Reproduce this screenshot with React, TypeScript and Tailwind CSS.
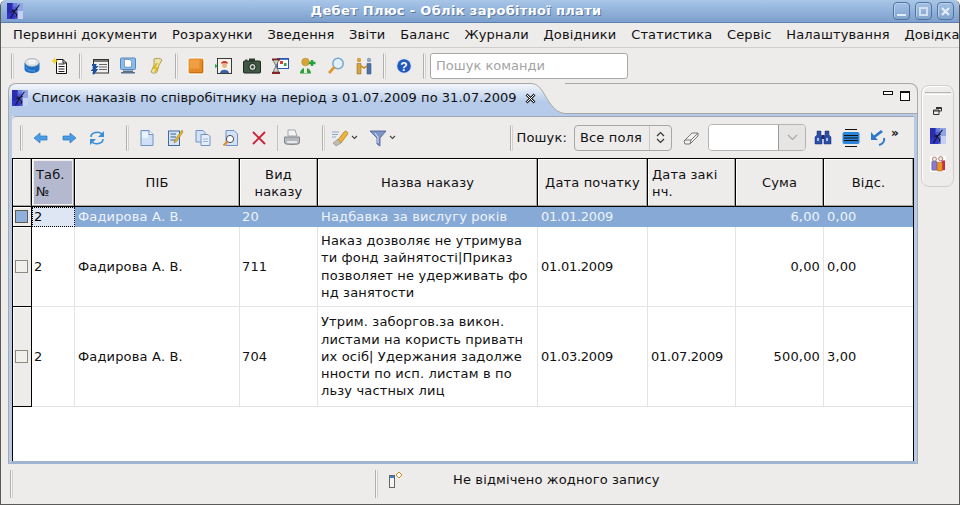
import type { ReactNode } from "react";

function Ico({ size = 18, children, className = "" }: { size?: number; children: ReactNode; className?: string }) {
  return (
    <svg width={size} height={size} viewBox="0 0 18 18" className={"shrink-0 " + className}>
      {children}
    </svg>
  );
}

const AppLogo = ({ size = 16 }: { size?: number }) => (
  <Ico size={size}>
    <rect x="0" y="0" width="18" height="18" fill="#4f5ad6" />
    <rect x="0" y="0" width="6" height="18" fill="#2a2cae" />
    <rect x="0" y="12" width="9" height="6" fill="#3136c4" />
    <rect x="11" y="0" width="7" height="9" fill="#8fa5e4" />
    <rect x="12" y="9" width="6" height="9" fill="#c6d0f2" />
    <rect x="7" y="0" width="4" height="4" fill="#6f83dc" />
    <path d="M4 17 L8 10 L6 7 M8 10 L14 2 M8 10 L11 13 L10 16 M5 10 L12 7" stroke="#141634" strokeWidth="1.3" fill="none" />
  </Ico>
);

const Sep = () => <div className="mr-[4px] ml-[5px] h-[26px] w-[3px] shrink-0 rounded-sm border-x border-r-[#d2d1cf] border-l-[#b0afad] bg-[#f7f6f5]" />;

const Db = () => (
  <Ico>
    <path d="M1.5 6 V12 C1.5 17.5 16.5 17.5 16.5 12 V6 Z" fill="#1f70c4" />
    <ellipse cx="9" cy="5.5" rx="7" ry="4" fill="#dfe3e8" stroke="#93a0ae" strokeWidth=".7" />
    <path d="M5 4 H13 M6 6 H12" stroke="#fff" />
    <path d="M3 10 C5 14 9 14 12 14" stroke="#5da6ea" fill="none" />
  </Ico>
);
const NewNote = () => (
  <Ico>
    <path d="M5.5 2.5 H12 L15.5 6 V16.5 H5.5 Z" fill="#fff" stroke="#111" />
    <path d="M12 2.5 V6 H15.5" fill="none" stroke="#111" />
    <path d="M7.5 7 H13.5 M7.5 9.5 H13.5 M7.5 12 H13.5 M7.5 14.5 H13.5" stroke="#222" />
    <path d="M3.5 0 L4.5 3 L7.5 4 L4.5 5 L3.5 8 L2.5 5 L0 4 L2.5 3 Z" fill="#f2d21c" />
  </Ico>
);
const ListDoc = () => (
  <Ico>
    <rect x="2.5" y="2.5" width="15" height="13.5" fill="#efefef" stroke="#333" />
    <path d="M3 4 H17" stroke="#777" strokeWidth="2" />
    <path d="M8 7.5 H16 M8 10 H16 M8 12.5 H16" stroke="#666" />
    <path d="M1 8 H4 L3 10 H5 L2 13 H5 L2 17" stroke="#1c4f9f" strokeWidth="2.2" fill="none" />
  </Ico>
);
const Monitor = () => (
  <Ico>
    <rect x="1.5" y="1" width="15" height="11.5" rx="1" fill="#86bdf0" stroke="#5b86ba" />
    <path d="M5.5 2.5 H10.5 L12.5 4.5 V10 H5.5 Z" fill="#fff" stroke="#567" strokeWidth=".5" />
    <path d="M4 13.5 H14 V15 H16 V16.5 H2 V15 H4 Z" fill="#59708c" />
  </Ico>
);
const Scroll = () => (
  <Ico>
    <path d="M7 2 C9 1 14 1 15 3 L12 8 L10 15 C8 17 5 16 4 15 L7 8 Z" fill="#ece3a8" stroke="#9c8c48" strokeWidth=".8" />
    <path d="M10 6 L7 11 H10 L8 15" stroke="#e0b70f" strokeWidth="1.6" fill="none" />
  </Ico>
);
const Orange = () => (
  <Ico>
    <rect x="1" y="1" width="16" height="16" rx="2" fill="#e58a26" stroke="#fff" />
    <rect x="2.5" y="2.5" width="10" height="9" rx="1" fill="#ee9f42" />
    <path d="M2.5 15.5 H15.5 V4" stroke="#c5701c" fill="none" />
  </Ico>
);
const Photo = () => (
  <Ico>
    <rect x="2.5" y="1.5" width="14" height="15" fill="#f3f1ea" stroke="#3a3a3a" />
    <path d="M6 6.5 C6 3 13 3 13 6.5 Z" fill="#c8321e" />
    <circle cx="9.5" cy="8.5" r="2.4" fill="#e8b083" />
    <path d="M5 16 C5 11.5 14 11.5 14 16 Z" fill="#3b62a8" />
    <path d="M0 7 L3 9 L0 11 Z" fill="#1ea54a" />
  </Ico>
);
const Camera = () => (
  <Ico>
    <rect x=".5" y="4" width="17" height="12" rx="1" fill="#3f5945" stroke="#1f2b22" />
    <rect x="6" y="1.5" width="6" height="3" fill="#2a3b2e" />
    <rect x="2" y="2.5" width="2.5" height="1.5" fill="#444" />
    <circle cx="9.5" cy="10" r="3.6" fill="#c9cfc9" stroke="#1d241f" />
    <circle cx="9.5" cy="10" r="1.4" fill="#243" />
  </Ico>
);
const Hourglass = () => (
  <Ico>
    <rect x="6.5" y="1.5" width="11" height="10" fill="#fff" stroke="#2b56b0" />
    <path d="M6.5 2 H17.5" stroke="#2b56b0" strokeWidth="1.6" />
    <rect x="9" y="4" width="3" height="3" fill="#d83a2a" />
    <rect x="13" y="6" width="2.5" height="3" fill="#2aa04a" />
    <path d="M1 2.5 H9 M1 16 H9" stroke="#8c1e1e" strokeWidth="2" />
    <path d="M2 3 L8 3 L5 9 L8 15 L2 15 L5 9 Z" fill="#d8d2c5" stroke="#444" strokeWidth=".7" />
  </Ico>
);
const UserAdd = () => (
  <Ico>
    <circle cx="6.5" cy="5" r="3.8" fill="#d8a534" stroke="#a87a1f" strokeWidth=".5" />
    <path d="M1 16.5 C1 9 12 9 12 16.5 Z" fill="#2f9c3f" />
    <path d="M5 11 H8 V16 H5 Z" fill="#e6f2d0" />
    <path d="M13 3 V9 M10 6 H16.5" stroke="#1ea33a" strokeWidth="2.4" />
  </Ico>
);
const Magnifier = () => (
  <Ico>
    <circle cx="11" cy="6.5" r="5.2" fill="#e2f0fb" stroke="#79a7cf" strokeWidth="1.5" />
    <path d="M7.5 10 L2 16" stroke="#dd9630" strokeWidth="2.6" />
  </Ico>
);
const Handshake = () => (
  <Ico>
    <circle cx="4" cy="3" r="2.2" fill="#d9a441" />
    <circle cx="14" cy="3" r="2.2" fill="#8fa5c6" />
    <path d="M2 6.5 H6 V17 H2 Z" fill="#d9a441" stroke="#80601f" strokeWidth=".5" />
    <path d="M12 6.5 H16 V17 H12 Z" fill="#4f74ad" stroke="#2d4670" strokeWidth=".5" />
    <path d="M6 9 L9 11 L12 9" stroke="#c98e2c" strokeWidth="1.6" fill="none" />
  </Ico>
);
const Help = () => (
  <Ico>
    <circle cx="9" cy="9" r="8" fill="#dfe5ee" />
    <circle cx="9" cy="9" r="6.8" fill="#2158c0" />
    <text x="9" y="13.5" textAnchor="middle" fontSize="12" fontWeight="700" fill="#fff" fontFamily="'Liberation Sans', sans-serif">?</text>
  </Ico>
);
const ArrowL = () => (
  <Ico>
    <path d="M2 9 L8 4 V7 H15 V11 H8 V14 Z" fill="#4a9de3" stroke="#2a76be" strokeWidth=".7" />
  </Ico>
);
const ArrowR = () => (
  <Ico>
    <path d="M16 9 L10 4 V7 H3 V11 H10 V14 Z" fill="#4a9de3" stroke="#2a76be" strokeWidth=".7" />
  </Ico>
);
const Refresh = () => (
  <Ico>
    <path d="M3 8 C3 3 11 2 14 5 M15 10 C15 15 7 16 4 13" stroke="#3a8ed8" strokeWidth="1.6" fill="none" />
    <path d="M16 2 V8 H10 Z M2 16 V10 H8 Z" fill="#3a8ed8" />
  </Ico>
);
const Doc = () => (
  <Ico>
    <path d="M3 1.5 H11 L15 5.5 V16.5 H3 Z" fill="#cfe0f6" stroke="#7192c4" />
    <path d="M4 3 H10 V9 H4 Z" fill="#eaf2fc" />
    <path d="M11 1.5 V5.5 H15" fill="#fff" stroke="#7192c4" />
  </Ico>
);
const EditDoc = () => (
  <Ico>
    <rect x="2.5" y="2" width="11" height="14.5" fill="#d6e4f6" stroke="#3f6aa6" />
    <path d="M4.5 5 H10 M4.5 8 H10 M4.5 11 H9" stroke="#3a5f93" />
    <path d="M16 1 L9 11 L8 14 L11 12 L17 3 Z" fill="#ecb81e" stroke="#8a6b10" strokeWidth=".5" />
  </Ico>
);
const CopyDoc = () => (
  <Ico>
    <path d="M2 1.5 H9 L11 3.5 V13 H2 Z" fill="#d3e2f6" stroke="#7192c4" />
    <path d="M7 5.5 H14 L16 7.5 V16.5 H7 Z" fill="#e4edf9" stroke="#7192c4" />
    <path d="M9 10 H14 M9 12.5 H14" stroke="#9bb5d8" />
  </Ico>
);
const FindDoc = () => (
  <Ico>
    <path d="M4 1.5 H12 L15.5 5 V16.5 H4 Z" fill="#d3e2f6" stroke="#7192c4" />
    <circle cx="8" cy="10" r="3.6" fill="#fff" stroke="#4d4d4d" />
    <path d="M5.5 12.5 L1.5 16.5" stroke="#d9902c" strokeWidth="2.2" />
  </Ico>
);
const Cross = () => (
  <Ico>
    <path d="M3 3 L15 15 M15 3 L3 15" stroke="#cf1f38" strokeWidth="1.9" />
  </Ico>
);
const Printer = () => (
  <Ico>
    <path d="M5 1 H12 L14 7 H5 Z" fill="#f3f4f5" stroke="#a3a7ab" />
    <path d="M1.5 8 H16.5 V14 C16.5 16 1.5 16 1.5 14 Z" fill="#b4b8bc" stroke="#85898e" />
    <rect x="4" y="12" width="10" height="2" fill="#e6e8ea" />
  </Ico>
);
const Stamp = () => (
  <Ico>
    <path d="M7 11 L13 3 C15 1 18 3 16 6 L10 14 Z" fill="#efb23a" stroke="#9a6f18" strokeWidth=".6" />
    <path d="M2 14 L7 10 L10 14 L5 17 Z" fill="#c2bcae" stroke="#776" strokeWidth=".5" />
    <path d="M1 3 H8 M1 5.5 H7 M1 8 H5" stroke="#8fa6d0" />
  </Ico>
);
const Funnel = () => (
  <Ico>
    <path d="M1 2 H17 L11 9 V17 L8 15 V9 Z" fill="#7e95c8" stroke="#44598f" strokeWidth=".8" />
    <path d="M6 4 L9 8 V14" stroke="#dfe7f6" fill="none" />
  </Ico>
);
const Chev = () => (
  <svg width="7" height="5" viewBox="0 0 7 5" className="shrink-0">
    <path d="M1 1 L3.5 3.5 L6 1" stroke="#444" strokeWidth="1.1" fill="none" />
  </svg>
);
const Eraser = () => (
  <Ico>
    <path d="M2 12 L10 4 H16 L16 7 L8 15 H3 Z" fill="#f2f1ef" stroke="#777" />
    <path d="M3 11 H9 L8 15 M9 11 L16 4" stroke="#777" fill="none" />
  </Ico>
);
const Binoculars = () => (
  <Ico>
    <path d="M3 2 H7 V6 L8 8 V15 H1 V8 L3 6 Z M11 2 H15 V6 L17 8 V15 H10 V8 L11 6 Z" fill="#2d4fa8" stroke="#1b2f6f" strokeWidth=".5" />
    <rect x="7.5" y="6" width="3" height="4" fill="#1b2f6f" />
    <rect x="3" y="9" width="2" height="3" fill="#a8c0ee" />
    <rect x="12" y="9" width="2" height="3" fill="#a8c0ee" />
  </Ico>
);
const Lines = () => (
  <Ico>
    <rect x=".5" y="3" width="17" height="12" rx="2" fill="#2c85d8" />
    <path d="M3 .5 H15 M3 17.5 H15 M2 6.5 H16 M2 9 H16 M2 11.5 H16" stroke="#111" strokeWidth="1.1" />
  </Ico>
);
const BackArrow = () => (
  <Ico>
    <path d="M2 3 V11 H9 L6.5 8.5 L14 3 L12 1 L5 6.5 L2 3 Z" fill="#2c78cc" />
    <path d="M15 9 C16 12 14 15 10 16" stroke="#2c78cc" strokeWidth="2" fill="none" />
  </Ico>
);
const People = () => (
  <Ico size={16}>
    <rect x="0" y="0" width="18" height="18" fill="#fff" />
    <circle cx="5" cy="3.5" r="2.4" fill="#f0e4dc" stroke="#732" strokeWidth=".6" />
    <circle cx="12" cy="3" r="2.4" fill="#f0e4dc" stroke="#732" strokeWidth=".6" />
    <rect x="2" y="6" width="6" height="10" rx="1" fill="#8c78dc" stroke="#553" strokeWidth=".5" />
    <rect x="13" y="5" width="4" height="11" fill="#c92a4a" />
    <rect x="8" y="7" width="6" height="10" rx="1" fill="#e8951f" stroke="#942" strokeWidth=".5" />
  </Ico>
);
const RestoreSmall = () => (
  <svg width="9" height="8" viewBox="0 0 9 8">
    <path d="M3 .5 H8.5 V4 H6 M.5 3 H6 V7.5 H.5 Z M.5 4 H6 M3 1.5 H8.5" stroke="#333" fill="none" />
  </svg>
);
const StatusIcon = () => (
  <svg width="16" height="18" viewBox="0 0 16 18">
    <rect x=".5" y="4.5" width="5" height="12" fill="#f5f5f5" stroke="#666" />
    <rect x="1" y="5" width="4" height="2" fill="#3f7fc7" />
    <path d="M10 1 L13 4 L10 7 L7 4 Z" fill="#fff" stroke="#c98e2c" />
  </svg>
);

const TBtn = ({ children }: { children: ReactNode }) => <div className="flex w-[28px] shrink-0 items-center justify-center">{children}</div>;

const Header = ({ w, children, left, active }: { w: string; children: ReactNode; left?: boolean; active?: boolean }) => (
  <div className={w + " flex shrink-0 items-center border-r border-r-black p-[2px] leading-[17px] shadow-[inset_-1px_-1px_0_#a8a7a5,inset_1px_1px_0_#fff] last:border-r-0 " + (left ? "text-left" : "justify-center text-center")}>
    <div className={"flex h-full w-full items-center " + (left ? "pl-[2px]" : "justify-center") + (active ? " bg-[#b5b9d0]" : "")}>
      <span>{children}</span>
    </div>
  </div>
);

const widths = ["w-[43px]", "w-[165px]", "w-[78px]", "w-[220px]", "w-[110px]", "w-[88px]", "w-[88px]", "w-[89px]"];

type Row = { h: string; tab: string; name: string; kind: string; title: string[]; start: string; end: string; sum: string; dev: string; sel?: boolean };

const rows: Row[] = [
  { h: "h-[20px]", tab: "2", name: "Фадирова А. В.", kind: "20", title: ["Надбавка за вислугу років"], start: "01.01.2009", end: "", sum: "6,00", dev: "0,00", sel: true },
  { h: "h-[80px]", tab: "2", name: "Фадирова А. В.", kind: "711", title: ["Наказ дозволяє не утримува", "ти фонд зайнятості|Приказ", "позволяет не удерживать фо", "нд занятости"], start: "01.01.2009", end: "", sum: "0,00", dev: "0,00" },
  { h: "h-[100px]", tab: "2", name: "Фадирова А. В.", kind: "704", title: ["Утрим. заборгов.за викон.", "листами на користь приватн", "их осіб| Удержания задолже", "нности по исп. листам в по", "льзу частных лиц"], start: "01.03.2009", end: "01.07.2009", sum: "500,00", dev: "3,00" },
];

function TableRow({ row }: { row: Row }) {
  const cell = "flex shrink-0 items-center border-r px-[3px] last:border-r-0 " + (row.sel ? "border-r-transparent text-[#eef3fb]" : "border-r-[#e4e4e4] border-b border-b-[#e4e4e4]");
  return (
    <div className={"flex " + row.h + (row.sel ? " bg-[#87a9d6]" : "")}>
      <div className="flex w-[19px] shrink-0 items-center border-r border-b border-r-black border-b-black bg-[#edeceb] pl-[2px] shadow-[inset_1px_1px_0_#fff]">
        <div className={"h-[13px] w-[13px] border " + (row.sel ? "border-[#5f5d52] bg-[#8fb0dc]" : "border-[#8d8a82] bg-[#f1efec]")} />
      </div>
      <div className={widths[0] + " " + cell + " pl-[2px]" + (row.sel ? " bg-[#dfe6f3] text-black outline-1 -outline-offset-1 outline-black outline-dotted" : "")}>{row.tab}</div>
      <div className={widths[1] + " " + cell}>{row.name}</div>
      <div className={widths[2] + " " + cell + " pl-[2px]"}>{row.kind}</div>
      <div className={widths[3] + " " + cell}>
        <div className="leading-[17.3px]">
          {row.title.map((l) => (
            <div key={l} className="whitespace-nowrap">{l}</div>
          ))}
        </div>
      </div>
      <div className={widths[4] + " " + cell + " tracking-[-0.25px]"}>{row.start}</div>
      <div className={widths[5] + " " + cell + " tracking-[-0.25px]"}>{row.end}</div>
      <div className={widths[6] + " " + cell + " justify-end"}>{row.sum}</div>
      <div className={widths[7] + " " + cell}>{row.dev}</div>
    </div>
  );
}

export default function App() {
  return (
    <div className="flex h-[505px] w-[960px] flex-col overflow-hidden rounded-t-md border-x border-b border-x-[#5a5a58] border-b-[#5a5a58] bg-[#edeceb] text-[13px] tracking-[0.15px] text-[#111] [font-family:'DejaVu_Sans',sans-serif]">
      {/* title bar */}
      <div className="flex h-[23px] shrink-0 items-center border-b border-b-[#5d7fae] bg-gradient-to-b from-[#a9c6e8] to-[#7c9fcc] pr-[5px] pl-[6px]">
        <AppLogo />
        <div className="flex-1 pr-[4px] text-center font-bold tracking-[0.33px] text-white [text-shadow:1px_1px_0_#5c7aa3]">Дебет Плюс - Облік заробітної плати</div>
        <div className="flex gap-[5px]">
          {["min", "max", "close"].map((k) => (
            <div key={k} className="flex h-[18px] w-[17px] items-center justify-center rounded-[4px] border border-[#53739f] shadow-[inset_1px_1px_0_#b9d0ec]">
              {k === "min" && <div className="mt-[7px] h-[2px] w-[9px] bg-[#e4ecf6]" />}
              {k === "max" && <div className="h-[9px] w-[9px] border-2 border-[#d3e0f0]" />}
              {k === "close" && (
                <svg width="11" height="11" viewBox="0 0 11 11">
                  <path d="M2 2 L9 9 M9 2 L2 9" stroke="#e4ecf6" strokeWidth="2.2" />
                </svg>
              )}
            </div>
          ))}
        </div>
      </div>

      {/* menu */}
      <div className="flex h-[25px] shrink-0 items-center gap-[14.7px] overflow-hidden border-b border-b-[#cfcecc] pl-[12px] whitespace-nowrap">
        {["Первинні документи", "Розрахунки", "Зведення", "Звіти", "Баланс", "Журнали", "Довідники", "Статистика", "Сервіс", "Налаштування", "Довідка"].map((m) => (
          <span key={m}>{m}</span>
        ))}
      </div>

      {/* main toolbar */}
      <div className="flex h-[35px] shrink-0 items-center pl-[5px]">
        <Sep />
        <TBtn><Db /></TBtn>
        <TBtn><NewNote /></TBtn>
        <Sep />
        <TBtn><ListDoc /></TBtn>
        <TBtn><Monitor /></TBtn>
        <TBtn><Scroll /></TBtn>
        <Sep />
        <TBtn><Orange /></TBtn>
        <TBtn><Photo /></TBtn>
        <TBtn><Camera /></TBtn>
        <TBtn><Hourglass /></TBtn>
        <TBtn><UserAdd /></TBtn>
        <TBtn><Magnifier /></TBtn>
        <TBtn><Handshake /></TBtn>
        <Sep />
        <TBtn><Help /></TBtn>
        <Sep />
        <div className="flex h-[26px] w-[198px] items-center rounded-[3px] border border-[#a8a7a5] bg-white pl-[5px] tracking-[0.02px] text-[#a3a3a3]">Пошук команди</div>
      </div>

      <div className="flex min-h-0 flex-1 pl-[7px]">
        {/* editor panel */}
        <div className="flex w-[910px] flex-col">
          <div className="flex h-[31px] shrink-0">
            <div className="flex w-[522px] items-center gap-[3px] rounded-tl-lg border-t border-l border-[#a9a8a6] bg-gradient-to-b from-[#f0f4fa] from-5% to-[#b5cbe9] to-60% pb-[2px] pl-[3px]">
              <AppLogo size={16} />
              <span className="ml-[1px] whitespace-nowrap tracking-[0.04px]">Список наказів по співробітнику на період з 01.07.2009 по 31.07.2009</span>
              <svg width="11" height="11" viewBox="0 0 11 11" className="relative z-10 ml-[5px] shrink-0">
                <path d="M1.5 1.5 L9.5 9.5 M9.5 1.5 L1.5 9.5" stroke="#222" strokeWidth="2.6" />
                <path d="M2 2 L9 9 M9 2 L2 9" stroke="#fff" strokeWidth="1" />
              </svg>
            </div>
            <svg width="35" height="31" viewBox="0 0 35 31" className="shrink-0">
              <defs>
                <linearGradient id="tabfill" x1="0" y1="0" x2="0" y2="1">
                  <stop offset="5%" stopColor="#f0f4fa" />
                  <stop offset="60%" stopColor="#b5cbe9" />
                </linearGradient>
              </defs>
              <path d="M0 .5 C6 .5 9 3 13 9 C18 17 24 30 35 30.5 V31 H0 Z" fill="url(#tabfill)" />
              <path d="M0 .5 C6 .5 9 3 13 9 C18 17 24 30 35 30.5" stroke="#a9a8a6" fill="none" />
            </svg>
            <div className="flex flex-1 justify-end gap-[7px] rounded-tr-lg border-t border-r border-b border-[#a9a8a6] pt-[7px] pr-[7px]">
              <div className="h-[4px] w-[10px] border border-[#111] bg-white" />
              <div className="h-[10px] w-[10px] border border-t-2 border-[#111] bg-white" />
            </div>
          </div>

          <div className="flex min-h-0 flex-1 flex-col border-x border-x-[#a9a8a6]">
            <div className="flex min-h-0 flex-1 flex-col border-x-[3px] border-t-2 border-b-[3px] border-x-[#b5cbe9] border-t-[#b5cbe9] border-b-[#9fb4d2]">
              {/* inner toolbar */}
              <div className="flex h-[42px] shrink-0 items-center rounded-tl-sm border-t border-t-[#9fa6b2] pl-[3px]">
                <Sep />
                <TBtn><ArrowL /></TBtn>
                <TBtn><ArrowR /></TBtn>
                <TBtn><Refresh /></TBtn>
                <div className="w-[10px] shrink-0" />
                <Sep />
                <TBtn><Doc /></TBtn>
                <TBtn><EditDoc /></TBtn>
                <TBtn><CopyDoc /></TBtn>
                <TBtn><FindDoc /></TBtn>
                <TBtn><Cross /></TBtn>
                <div className="ml-[4px] h-[26px] w-[1px] shrink-0 bg-[#c4c3c1]" />
                <TBtn><Printer /></TBtn>
                <div className="w-[11px] shrink-0" />
                <Sep />
                <div className="ml-[2px] flex shrink-0 items-center gap-[2px]"><Stamp /><Chev /></div>
                <div className="ml-[11px] flex shrink-0 items-center gap-[2px]"><Funnel /><Chev /></div>
                <div className="flex-1" />
                <Sep />
                <span>Пошук:</span>
                <div className="ml-[7px] flex h-[26px] w-[98px] items-center justify-between rounded-[4px] border border-[#a8a7a5] pl-[5px]">
                  <span>Все поля</span>
                  <div className="flex h-full w-[22px] items-center justify-center border-l border-l-[#c9c8c6]">
                    <svg width="9" height="13" viewBox="0 0 9 13">
                      <path d="M1 5 L4.5 1.5 L8 5 M1 8 L4.5 11.5 L8 8" stroke="#333" strokeWidth="1.2" fill="none" />
                    </svg>
                  </div>
                </div>
                <div className="ml-[10px] flex w-[17px] justify-center"><Eraser /></div>
                <div className="ml-[9px] flex h-[27px] w-[98px] overflow-hidden rounded-[4px] border border-[#b5b4b2]">
                  <div className="w-[70px] border-r border-r-[#999] bg-white" />
                  <div className="flex flex-1 items-center justify-center bg-[#e6e5e3]">
                    <svg width="11" height="7" viewBox="0 0 11 7">
                      <path d="M1 1 L5.5 5.5 L10 1" stroke="#a8a7a5" strokeWidth="1.2" fill="none" />
                    </svg>
                  </div>
                </div>
                <div className="ml-[3px] flex w-[28px] justify-center"><Binoculars /></div>
                <div className="flex w-[28px] justify-center"><Lines /></div>
                <div className="flex w-[26px] justify-center"><BackArrow /></div>
                <span className="mb-[10px] w-[23px] text-[12px] leading-none font-bold">»</span>
              </div>

              {/* table */}
              <div className="flex min-h-0 flex-1 flex-col overflow-hidden border-t border-r border-l border-black bg-white">
                <div className="flex h-[48px] shrink-0 border-b border-b-black bg-[#edeceb]">
                  <div className="w-[19px] shrink-0 border-r border-r-black shadow-[inset_-1px_-1px_0_#a8a7a5,inset_1px_1px_0_#fff]" />
                  <Header w={widths[0]} left active>Таб.<br />№</Header>
                  <Header w={widths[1]}>ПІБ</Header>
                  <Header w={widths[2]}>Вид<br />наказу</Header>
                  <Header w={widths[3]}>Назва наказу</Header>
                  <Header w={widths[4]}>Дата початку</Header>
                  <Header w={widths[5]} left>Дата закі<br />нч.</Header>
                  <Header w={widths[6]}>Сума</Header>
                  <Header w={widths[7]}>Відс.</Header>
                </div>
                {rows.map((r) => (
                  <TableRow key={r.kind} row={r} />
                ))}
              </div>
            </div>
          </div>
        </div>

        {/* side trim */}
        <div className="mt-[2px] ml-[3px] flex h-[102px] w-[33px] flex-col items-center rounded-lg border border-[#cfcecc] pt-[6px] shadow-[inset_1px_1px_0_#fff]">
          <div className="h-[3px] w-[26px] border-t border-b border-t-[#b5b4b2] border-b-white" />
          <div className="mt-[12px]"><RestoreSmall /></div>
          <div className="mt-[13px]"><AppLogo /></div>
          <div className="mt-[12px]"><People /></div>
        </div>
      </div>

      {/* status bar */}
      <div className="flex h-[40px] shrink-0 items-center">
        <div className="ml-[9px] h-[28px] w-[3px] border-x border-r-[#d2d1cf] border-l-[#b0afad] bg-[#f7f6f5]" />
        <div className="ml-[362px] h-[28px] w-[3px] border-x border-r-[#d2d1cf] border-l-[#b0afad] bg-[#f7f6f5]" />
        <div className="mb-[8px] ml-[11px]"><StatusIcon /></div>
        <span className="mb-[9px] ml-[48px]">Не відмічено жодного запису</span>
      </div>
    </div>
  );
}
